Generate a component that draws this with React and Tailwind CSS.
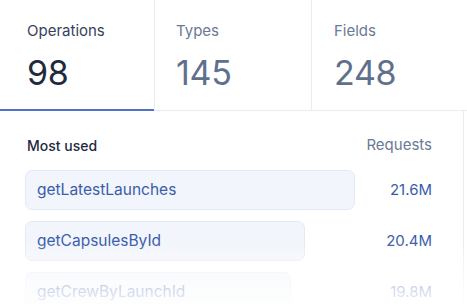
import React from 'react';

const tabs = [
  { label: 'Operations', value: '98', active: true },
  { label: 'Types', value: '145' },
  { label: 'Fields', value: '248' },
];

const rows = [
  { name: 'getLatestLaunches', requests: '21.6M', width: 'w-[330px]' },
  { name: 'getCapsulesById', requests: '20.4M', width: 'w-[280px]' },
  { name: 'getCrewByLaunchId', requests: '19.8M', width: 'w-[266px]' },
];

const App = () => {
  return (
    <div className="relative w-[467px] h-[304px] overflow-hidden bg-white font-['Inter',sans-serif]">
      {/* tabs */}
      <div className="flex h-[111px] border-b border-[#e8ecf3]">
        {tabs.map((tab, i) => (
          <div
            key={tab.label}
            className={
              'relative flex flex-col pt-[20px] ' +
              (i === 0 ? 'w-[155px] pl-[27px] border-r border-[#e8ecf3]' : i === 1 ? 'w-[157px] pl-[21px] border-r border-[#e8ecf3]' : 'flex-1 pl-[22px]')
            }
          >
            <span className={'text-[15px] leading-[22px] ' + (tab.active ? 'text-[#36425a]' : 'text-[#6b7a93]')}>
              {tab.label}
            </span>
            <span className={'mt-[11px] text-[34px] leading-[40px] tracking-[-0.3px] ' + (tab.active ? 'text-[#1f2a40]' : 'text-[#5f708d]')}>
              {tab.value}
            </span>
            {tab.active && <div className="absolute left-0 right-0 bottom-[-1px] h-[2px] bg-[#4b74c6]" />}
          </div>
        ))}
      </div>

      {/* most used */}
      <div className="w-[464px] h-[193px] border-r border-[#e8ecf3] pl-[25px] pr-[31px]">
        <div className="flex justify-between items-center pt-[10px] h-[58px]">
          <span className="pl-[2px] text-[14px] font-medium text-[#1f2a40]">Most used</span>
          <span className="text-[15px] text-[#6b7a93]">Requests</span>
        </div>
        <div className="flex flex-col gap-[11px] mt-[1px]">
          {rows.map((row) => (
            <div key={row.name} className="flex items-center justify-between">
              <div className={row.width + ' h-[40px] flex items-center pl-[11px] rounded-[7px] bg-[#f2f5fb] border border-[#e4eaf5] text-[15.5px] text-[#3a5daa]'}>
                {row.name}
              </div>
              <span className="text-[15px] text-[#3a5daa]">{row.requests}</span>
            </div>
          ))}
        </div>
      </div>

      {/* fade */}
      <div className="absolute left-0 right-0 bottom-0 h-[62px] bg-gradient-to-b from-white/0 via-white/60 to-white/90 pointer-events-none" />
    </div>
  );
};

export default App;
